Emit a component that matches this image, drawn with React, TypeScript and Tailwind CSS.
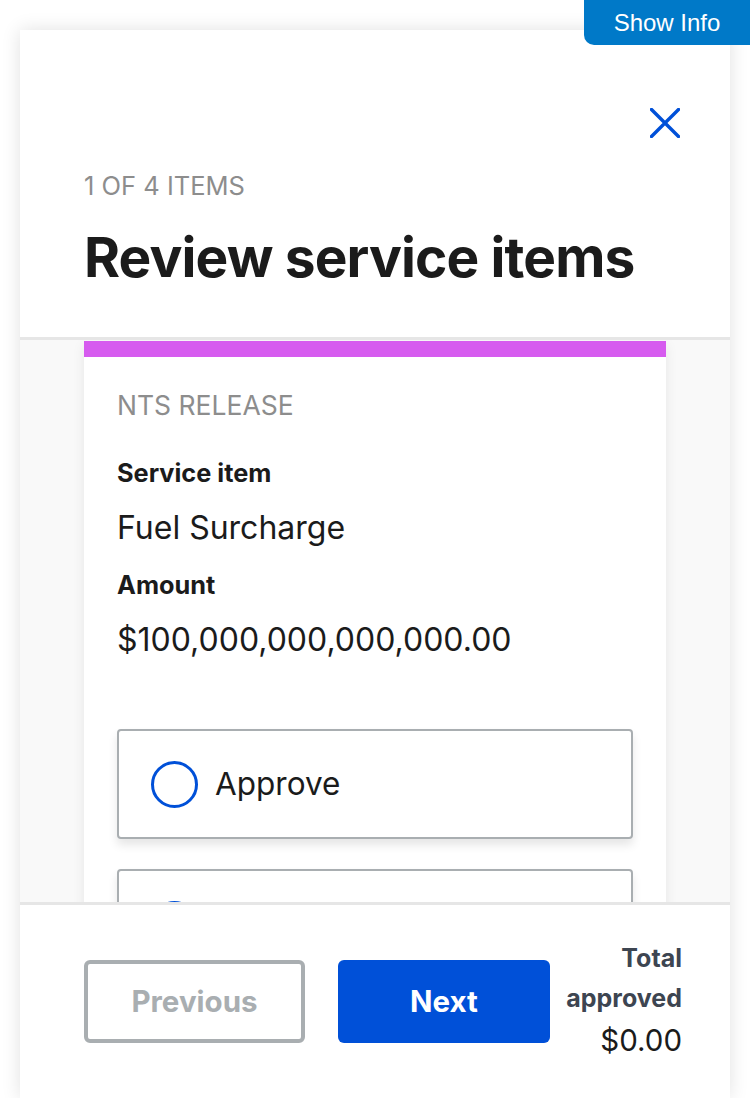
export default function App() {
  return (
    <div className="relative h-[1098px] w-[750px] overflow-hidden bg-white font-['Inter',sans-serif]">
      <button className="absolute right-0 top-0 z-10 h-[45px] w-[166px] rounded-bl-[10px] bg-[#0079c8] font-['Liberation_Sans',sans-serif] text-[24px] text-white">
        Show Info
      </button>

      <div className="ml-[20px] mt-[30px] flex h-[1068px] w-[710px] flex-col bg-white shadow-[0_0_18px_rgba(0,0,0,0.12)]">
        <header className="border-b-[3px] border-[#e6e6e6] px-[64px] pb-[48px] pt-[78px]">
          <div className="flex justify-end">
            <svg width="30" height="30" viewBox="0 0 30 30" className="mr-[-14px]">
              <path d="M1.5 1.5 L28.5 28.5 M28.5 1.5 L1.5 28.5" stroke="#0050d8" strokeWidth="3.4" strokeLinecap="square" fill="none" />
            </svg>
          </div>
          <p className="mt-[32px] text-[25.5px] uppercase leading-[32px] text-[#8d8d8d]">
            1 of 4 items
          </p>
          <h1 className="mt-[23px] text-[55px] font-bold leading-[64px] tracking-[-0.016em] text-[#1b1b1b]">
            Review service items
          </h1>
        </header>

        <main className="flex-1 overflow-hidden bg-[#f9f9f9] px-[64px] pt-[1px]">
          <div className="border-t-[16px] border-[#d65bef] bg-white px-[33px] pt-[31px] pb-[40px] shadow-[0_4px_12px_rgba(0,0,0,0.08)]">
            <p className="text-[26.5px] uppercase leading-[34px] text-[#8d8d8d]">NTS release</p>
            <p className="mt-[35px] text-[25.3px] font-bold leading-[32px] text-[#1b1b1b]">Service item</p>
            <p className="mt-[21px] text-[32px] leading-[36px] text-[#1b1b1b]">Fuel Surcharge</p>
            <p className="mt-[23px] text-[25.3px] font-bold leading-[32px] text-[#1b1b1b]">Amount</p>
            <p className="mt-[21px] text-[32px] leading-[36px] text-[#1b1b1b]">$100,000,000,000,000.00</p>

            <div className="mt-[71px] flex flex-col gap-[30px]">
              {['Approve', 'Reject'].map((label) => (
                <label
                  key={label}
                  className="flex h-[110px] items-center gap-[17px] rounded-[4px] border-2 border-[#a9aeb1] bg-white px-[32px] shadow-[0_6px_10px_rgba(0,0,0,0.1)]"
                >
                  <span className="h-[47px] w-[47px] rounded-full border-[3.5px] border-[#0050d8] bg-white" />
                  <span className="text-[31.5px] text-[#1b1b1b]">{label}</span>
                </label>
              ))}
            </div>
          </div>
        </main>

        <footer className="flex h-[196px] items-start border-t-[3px] border-[#e6e6e6] bg-white pl-[64px] pr-[48px] pt-[55px]">
          <button className="h-[83px] w-[221px] rounded-[6px] border-4 border-[#a9aeb1] bg-white text-[29.5px] font-bold text-[#a9aeb1]">
            Previous
          </button>
          <button className="ml-[33px] h-[83px] w-[212px] rounded-[6px] bg-[#0050d8] text-[29.5px] font-bold text-white">
            Next
          </button>
          <div className="ml-auto -mt-[22px] text-right">
            <p className="text-[25px] font-bold leading-[40px] text-[#3d4551]">Total</p>
            <p className="text-[25px] font-bold leading-[40px] text-[#3d4551]">approved</p>
            <p className="text-[29.5px] leading-[44px] text-[#1b1b1b]">$0.00</p>
          </div>
        </footer>
      </div>
    </div>
  )
}
